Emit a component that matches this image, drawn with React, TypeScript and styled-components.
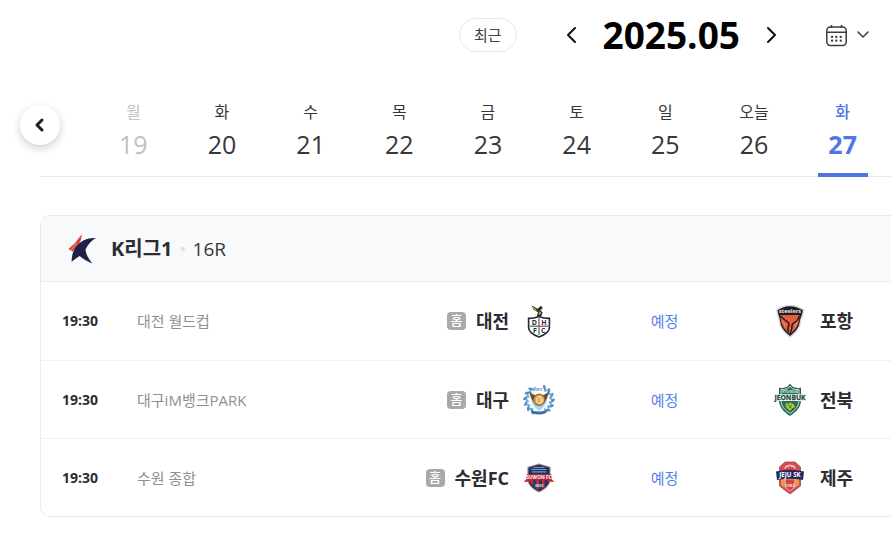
import React from "react";
import styled, { createGlobalStyle } from "styled-components";

const GlobalStyle = createGlobalStyle`
  * { box-sizing: border-box; }
  body {
    margin: 0;
    background: #fff;
    color: #2b2d33;
    font-family: "Open Sans", "Noto Sans CJK KR", sans-serif;
    overflow-x: hidden;
  }
  button { font: inherit; color: inherit; background: none; border: 0; padding: 0; cursor: pointer; }
  a { color: inherit; text-decoration: none; }
  svg { display: block; }
`;

const Page = styled.main`
  padding-left: 40px;
`;

const Toolbar = styled.header`
  display: flex;
  align-items: center;
  justify-content: flex-end;
  height: 70px;
  padding-right: 22px;
`;

const RecentButton = styled.button`
  && {
    height: 34px;
    padding: 0 14px;
    margin-right: 48px;
    border: 1px solid #e6e8ea;
    border-radius: 17px;
    font-size: 15px;
    line-height: 30px;
    color: #3f4146;
  }
`;

const MonthNav = styled.div`
  display: flex;
  align-items: center;
  gap: 26px;
  margin-right: 48px;
`;

const MonthTitle = styled.h1`
  margin: 0;
  font-size: 37px;
  line-height: 48px;
  font-weight: 700;
  color: #000;
`;

const CalendarButton = styled.button`
  && {
    display: flex;
    align-items: center;
    gap: 10px;
  }
`;

const DateStrip = styled.nav`
  position: relative;
  height: 107px;
  padding: 30px 4px 0 49px;
  border-bottom: 1px solid #e9ebee;
`;

const StripButton = styled.button`
  && {
    position: absolute;
    left: -20px;
    top: 35px;
    width: 40px;
    height: 40px;
    display: grid;
    place-items: center;
    border-radius: 50%;
    background: #fff;
    box-shadow: 0 3px 9px rgba(0, 0, 0, 0.2);
  }
`;

const DayList = styled.ul`
  display: grid;
  grid-template-columns: repeat(9, 1fr);
  height: 77px;
  margin: 0;
  padding: 0;
  list-style: none;
`;

type DayTone = "past" | "normal" | "active";
const toneColor = { past: "#bfc1c5", normal: "#35373b", active: "#4f76e8" };

const DayButton = styled.button<{ $tone: DayTone }>`
  && {
    display: flex;
    flex-direction: column;
    align-items: center;
    width: 50px;
    height: 77px;
    margin: 0 auto;
    color: ${(p) => toneColor[p.$tone]};
    border-bottom: 4px solid ${(p) => (p.$tone === "active" ? "#4f76e0" : "transparent")};
  }
`;

const DayName = styled.span<{ $bold: boolean }>`
  font-size: 16px;
  line-height: 24px;
  font-weight: ${(p) => (p.$bold ? 500 : 400)};
  white-space: nowrap;
`;

const DayNumber = styled.span<{ $bold: boolean }>`
  margin-top: 2px;
  font-size: 25px;
  line-height: 36px;
  font-weight: ${(p) => (p.$bold ? 700 : 400)};
`;

const Card = styled.section`
  margin-top: 38px;
  border: 1px solid #e9ebee;
  border-right: 0;
  border-radius: 10px 0 0 10px;
  overflow: hidden;
`;

const LeagueHeader = styled.div`
  display: flex;
  align-items: center;
  height: 66px;
  padding-left: 27px;
  background: #f8f9fb;
  border-bottom: 1px solid #eceef1;
`;

const LeagueName = styled.h2`
  margin: 0 0 0 14px;
  font-size: 20px;
  line-height: 28px;
  font-weight: 700;
`;

const Dot = styled.i`
  width: 4px;
  height: 4px;
  margin: 0 8px;
  border-radius: 50%;
  background: #dcdee2;
`;

const Round = styled.span`
  font-size: 19px;
  line-height: 28px;
  color: #35373b;
`;

const MatchList = styled.ul`
  margin: 0;
  padding: 0;
  list-style: none;
`;

const MatchRow = styled.li`
  display: grid;
  grid-template-columns: 75px auto 1fr 219px 117px;
  align-items: center;
  height: 78px;
  padding-left: 21px;
  & + & {
    border-top: 1px solid #eff0f3;
  }
`;

const Time = styled.time`
  font-size: 14px;
  line-height: 24px;
  font-weight: 700;
`;

const Venue = styled.span`
  font-size: 15px;
  line-height: 24px;
  color: #8c8f97;
`;

const Side = styled.div<{ $home?: boolean }>`
  display: flex;
  align-items: center;
  justify-content: ${(p) => (p.$home ? "flex-end" : "flex-start")};
  gap: 14px;
`;

const TeamLabel = styled.span`
  display: flex;
  align-items: center;
  gap: 10px;
`;

const TeamName = styled.strong`
  font-size: 18px;
  line-height: 26px;
  font-weight: 700;
`;

const HomeBadge = styled.span`
  width: 19px;
  height: 18px;
  border-radius: 4px;
  background: #a9a9ab;
  color: #fff;
  font-size: 13px;
  line-height: 17px;
  font-weight: 500;
  text-align: center;
`;

const Status = styled.a`
  justify-self: center;
  font-size: 15px;
  line-height: 24px;
  && { color: #557fec; }
`;

function Chevron({ d, w, h, stroke = 2, color = "#111" }: { d: string; w: number; h: number; stroke?: number; color?: string }) {
  return (
    <svg width={w} height={h} viewBox={`0 0 ${w} ${h}`} fill="none" stroke={color} strokeWidth={stroke} strokeLinecap="round" strokeLinejoin="round" aria-hidden="true">
      <path d={d} />
    </svg>
  );
}

function CalendarIcon() {
  return (
    <svg width="21" height="23" viewBox="0 0 21 23" fill="none" stroke="#3a3c42" strokeWidth="1.5" aria-hidden="true">
      <rect x="0.8" y="3" width="19.4" height="18.6" rx="3.5" />
      <path d="M1 8.3H20M5.5 1V4M15.5 1V4" />
      <g fill="#3a3c42" stroke="none">
        {[5, 9.2, 13.6].map((x) => [11.8, 15.6].map((y) => <rect key={`${x}-${y}`} x={x} y={y} width="2.2" height="2.2" rx="0.8" />))}
      </g>
    </svg>
  );
}

function LeagueLogo() {
  return (
    <svg width="29" height="30" viewBox="0 0 29 30" aria-hidden="true">
      <path d="M13.6 0.6C13.8 4.6 12.6 8 10 11.2L4.6 17.6L0.4 15L6.6 9.6Z" fill="#d84536" />
      <path d="M3 16.2L8.6 9.4" stroke="#f3b3a8" strokeWidth="0.7" fill="none" />
      <path d="M27.6 4C20 3.4 13.4 6.4 9 11.8C5 16.4 3.6 21.4 3.6 27.8C6.2 25.8 9 23.6 11.6 22C15.4 25 19.6 28 24.6 29.4C20.6 25.2 18.2 20.6 17.4 15.8C19.6 11 22.8 7 27.6 4Z" fill="#20204a" />
    </svg>
  );
}

const crestText = { fontFamily: "Open Sans, sans-serif", fontWeight: 700, textAnchor: "middle" as const };

function DaejeonCrest() {
  return (
    <svg width="32" height="34" viewBox="0 0 32 34" aria-hidden="true">
      <path d="M8.5 1.2L14.5 4.8L18 1.8L19.8 4L17.4 6.3L19.7 8.4L18 12.8H13.6L15 8.2L10.8 6Z" fill="#26362f" />
      <path d="M9 1.8L14 6.3L12.4 7ZM16.5 7L18.4 9.2L15.5 11Z" fill="#c9b83c" />
      <path d="M5.6 14.4Q11 14.5 16 12.4Q21 14.5 26.4 14.4V23.5C26.4 28.5 21.5 31 16 33C10.5 31 5.6 28.5 5.6 23.5Z" fill="#fff" stroke="#22283b" strokeWidth="1.6" />
      <path d="M16 14V22.2" stroke="#c13f4e" strokeWidth="1.3" />
      <path d="M16 22.2V31" stroke="#338966" strokeWidth="1.3" />
      <path d="M6.7 22.2H16" stroke="#338966" strokeWidth="1.3" />
      <path d="M16 22.2H25.3" stroke="#c13f4e" strokeWidth="1.3" />
      <g {...crestText} fontSize="7" fill="#292c3c">
        <text x="11.3" y="20.8">D</text><text x="21" y="20.8">H</text>
        <text x="11.8" y="28.8">F</text><text x="20.2" y="28.8">C</text>
      </g>
    </svg>
  );
}

function DaeguCrest() {
  const leaves = [-145, -122, -99, -76, -53, -30, 30, 53, 76, 99, 122, 145];
  return (
    <svg width="32" height="32" viewBox="0 0 32 32" aria-hidden="true">
      {leaves.map((a) => (
        <g key={a} transform={`rotate(${a} 16 16)`}>
          <ellipse cx="14.5" cy="2.4" rx="1.3" ry="2.7" fill="#528fc8" transform="rotate(-50 14.5 2.4)" />
          <ellipse cx="17.4" cy="4.2" rx="1.1" ry="2.4" fill="#77acd8" transform="rotate(50 17.4 4.2)" />
        </g>
      ))}
      <path d="M7 8.5L12 11H20L25 8.5L24 16C23 21 20 24 16 27C12 24 9 21 8 16Z" fill="#a5d6ef" />
      <path d="M6.2 7.2C8.5 10 11 11 13 11.2L11 18C8.5 15.5 7 12 6.2 7.2ZM25.8 7.2C23.5 10 21 11 19 11.2L21.3 18C24 15.5 25 12 25.8 7.2Z" fill="#644d39" />
      <circle cx="16.2" cy="15.8" r="5.7" fill="#df9d42" stroke="#875328" />
      <path d="M19 13.5C17 11.8 13.3 13 13.3 16C13.3 19 17 20 19 18M15.5 15H19.5V17H16" fill="none" stroke="#f6e2b1" strokeWidth="1.2" />
      <text {...crestText} x="16" y="7" fontSize="4" fill="#6a88a5">DFC</text>
      <path d="M7.5 26Q16 29 24.5 26L23 29Q16 32 9 29Z" fill="#386da5" />
    </svg>
  );
}

function SuwonCrest() {
  return (
    <svg width="32" height="32" viewBox="0 0 34 32" aria-hidden="true">
      <path d="M17 1L28.8 4.5V17C28.8 24 23 28 17 31C11 28 5.2 24 5.2 17V4.5Z" fill="#25345e" stroke="#af9d87" strokeWidth="1" />
      <path d="M9 7H25M11 4.8H23M9.5 9.5H24.5" stroke="#7296bd" strokeWidth="1.1" />
      <path d="M8 18H11V24L8 21ZM14 18H17V28.5L14 27ZM20 18H23V26L20 28Z" fill="#bd3041" />
      <path d="M0.6 20L3.6 17.4L4 12H30L30.4 17.4L33.4 20H26L25.5 18.4H8.5L8 20Z" fill="#b52a3b" />
      <text {...crestText} x="17" y="17" fontSize="5" fill="#fff">SUWON FC</text>
      <text {...crestText} x="17" y="26" fontSize="4" fill="#dfe4ee">2003</text>
    </svg>
  );
}

function PohangCrest() {
  return (
    <svg width="32" height="34" viewBox="0 0 32 34" aria-hidden="true">
      <path d="M3 5.5L8 3Q16 0 24 3L29.5 5.5C30 10 27 13 26.7 17C26 25 21 29 16 33C11 29 6 25 5.3 17C5 13 2.5 10 3 5.5Z" fill="#201d20" stroke="#dadbdd" strokeWidth="1.5" />
      <path d="M6.5 11H25.5C25.3 21 22 25 16 30C10 25 6.7 21 6.5 11Z" fill="#e35d45" />
      <path d="M7 12C10 18 14.5 16 15 20C15.4 23 12 24 14.5 28M25 12C24 20 18 17 18 22C18 25 17 27 16 30" fill="none" stroke="#28191a" strokeWidth="1.5" />
      <path d="M7.5 15L11 20L12 25ZM24.5 15L21.5 20L20.8 25Z" fill="#d9a55a" />
      <path d="M5 6.8Q16 3.2 27 6.8L26 10.8Q16 8 6 10.8Z" fill="#242327" />
      <text {...crestText} x="16" y="9.4" fontSize="5.5" fill="#e9e9e9">steelers</text>
    </svg>
  );
}

function JeonbukCrest() {
  return (
    <svg width="32" height="34" viewBox="0 0 32 34" aria-hidden="true">
      <path d="M16 0.8L19 4.1Q23 5.6 27 4.4V17C27 24.5 22 29 16 33C10 29 5 24.5 5 17V4.4Q9 5.6 13 4.1Z" fill="#24634c" />
      <path d="M16 3L18.3 5.7Q22 7 25 6.3V17C25 23 21.5 27 16 30.5C10.5 27 7 23 7 17V6.3Q10 7 13.7 5.7Z" fill="#287052" stroke="#e3eeea" strokeWidth="0.9" />
      <text {...crestText} x="16" y="9.8" fontSize="3.5" fill="#d7e7df">HYUNDAI</text>
      <path d="M0 11.2H32V18H0Z" fill="#fff" />
      <text {...crestText} x="16" y="17" fontSize="6.8" fill="#1b4d42" stroke="#1b4d42" strokeWidth="0.3">JEONBUK</text>
      <path d="M12 20L14.4 21L16 19.6L19.6 21.2L21 24L18 25.5L16 28L13.2 25.4L11.5 23Z" fill="#b3c739" />
      <path d="M13.3 22L16 23.3L18 21.8M15 25L17.5 24" stroke="#335d35" strokeWidth="0.8" fill="none" />
    </svg>
  );
}

function JejuCrest() {
  return (
    <svg width="32" height="34" viewBox="0 0 32 34" aria-hidden="true">
      <path d="M11 1H21L26.5 6V25L16 33L5.5 25V6Z" fill="#d84b4e" stroke="#894a65" strokeWidth="0.8" />
      <path d="M7 18L11 18L13 28L7 24ZM21 18H25V24L19 28Z" fill="#e59a46" />
      <path d="M11 18H21L20 27L16 30L12 27Z" fill="#d44146" stroke="#f0c5b7" strokeWidth="0.8" />
      <path d="M11 7.5Q12 4 14 5.5Q16 2.7 18 5.5Q20 4 21 7.5" fill="none" stroke="#f5d7d3" strokeWidth="1.4" />
      <path d="M2 10.5Q16 7 30 10.5L29 19Q16 16.5 3 19Z" fill="#25275d" />
      <text {...crestText} x="16" y="15.8" fontSize="6.2" fill="#fff">JEJU SK</text>
      <text {...crestText} x="16" y="26" fontSize="4" fill="#f7d7cd">1982</text>
    </svg>
  );
}

const days: { name: string; date: number; tone: DayTone }[] = [
  { name: "월", date: 19, tone: "past" },
  { name: "화", date: 20, tone: "normal" },
  { name: "수", date: 21, tone: "normal" },
  { name: "목", date: 22, tone: "normal" },
  { name: "금", date: 23, tone: "normal" },
  { name: "토", date: 24, tone: "normal" },
  { name: "일", date: 25, tone: "normal" },
  { name: "오늘", date: 26, tone: "normal" },
  { name: "화", date: 27, tone: "active" },
];

const matches = [
  { time: "19:30", venue: "대전 월드컵", home: "대전", away: "포항", HomeCrest: DaejeonCrest, AwayCrest: PohangCrest },
  { time: "19:30", venue: "대구iM뱅크PARK", home: "대구", away: "전북", HomeCrest: DaeguCrest, AwayCrest: JeonbukCrest },
  { time: "19:30", venue: "수원 종합", home: "수원FC", away: "제주", HomeCrest: SuwonCrest, AwayCrest: JejuCrest },
];

export default function App() {
  return (
    <>
      <GlobalStyle />
      <Page>
        <Toolbar>
          <RecentButton type="button">최근</RecentButton>
          <MonthNav>
            <button type="button" aria-label="이전 달"><Chevron w={12} h={18} d="M10 2L3 9L10 16" /></button>
            <MonthTitle>2025.05</MonthTitle>
            <button type="button" aria-label="다음 달"><Chevron w={12} h={18} d="M2 2L9 9L2 16" /></button>
          </MonthNav>
          <CalendarButton type="button" aria-label="달력 열기">
            <CalendarIcon />
            <Chevron w={12} h={8} d="M1 1L6 6L11 1" stroke={1.5} color="#3a3c42" />
          </CalendarButton>
        </Toolbar>
        <DateStrip aria-label="날짜">
          <StripButton type="button" aria-label="이전 날짜"><Chevron w={12} h={16} d="M8 3L3 8L8 13" stroke={3} color="#1d1e20" /></StripButton>
          <DayList>
            {days.map((d) => (
              <li key={d.date}>
                <DayButton type="button" $tone={d.tone} aria-current={d.tone === "active" ? "date" : undefined}>
                  <DayName $bold={d.tone === "active"}>{d.name}</DayName>
                  <DayNumber $bold={d.tone === "active"}>{d.date}</DayNumber>
                </DayButton>
              </li>
            ))}
          </DayList>
        </DateStrip>
        <Card>
          <LeagueHeader>
            <LeagueLogo />
            <LeagueName>K리그1</LeagueName>
            <Dot />
            <Round>16R</Round>
          </LeagueHeader>
          <MatchList>
            {matches.map(({ time, venue, home, away, HomeCrest, AwayCrest }) => (
              <MatchRow key={home}>
                <Time>{time}</Time>
                <Venue>{venue}</Venue>
                <Side $home>
                  <TeamLabel>
                    <HomeBadge>홈</HomeBadge>
                    <TeamName>{home}</TeamName>
                  </TeamLabel>
                  <HomeCrest />
                </Side>
                <Status href="#">예정</Status>
                <Side>
                  <AwayCrest />
                  <TeamName>{away}</TeamName>
                </Side>
              </MatchRow>
            ))}
          </MatchList>
        </Card>
      </Page>
    </>
  );
}
